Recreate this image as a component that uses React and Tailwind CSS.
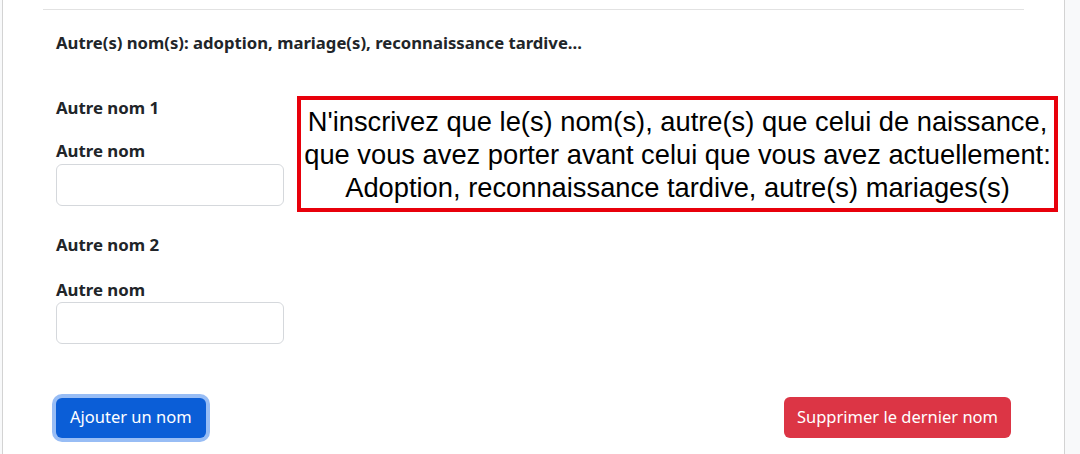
export default function App() {
  const entries = [1, 2];
  return (
    <div className="flex h-[454px] w-[1080px] overflow-hidden bg-[#f8f9fa] font-['Noto_Sans',sans-serif] text-[#212529]">
      <div className="ml-[2px] w-[1063px] border-x border-[#d3d3d3] bg-white">
        <div className="mx-[40px] mt-[9px] border-t border-[#e2e2e2]" />
        <div className="pl-[53px] pr-[40px]">
          <h6 className="mt-[21px] text-[16.7px] font-bold leading-[24px]">
            Autre(s) nom(s): adoption, mariage(s), reconnaissance tardive...
          </h6>
          <div className="mt-[41px] flex items-start gap-[13px]">
            <div className="w-[228px] shrink-0">
              {entries.map((n) => (
                <div key={n} className={n > 1 ? "mt-[27px]" : ""}>
                  <div className="text-[16.8px] font-bold leading-[24px]">Autre nom {n}</div>
                  <label
                    className={`block text-[16.8px] font-bold leading-[24px] ${n > 1 ? "mt-[21px]" : "mt-[19px]"}`}
                  >
                    Autre nom
                  </label>
                  <input
                    type="text"
                    className={`block h-[42px] w-[228px] rounded-[6px] border border-[#d5d8dc] bg-white px-3 ${n > 1 ? "mt-0" : "mt-[1px]"}`}
                  />
                </div>
              ))}
            </div>
            <div className="w-[761px] shrink-0 border-[4px] border-[#e8000b] pb-[4px] pt-[5px] text-center font-['Liberation_Sans',Arial,sans-serif] text-[27.3px] leading-[33px] text-black">
              N'inscrivez que le(s) nom(s), autre(s) que celui de naissance,
              <br />
              que vous avez porter avant celui que vous avez actuellement:
              <br />
              Adoption, reconnaissance tardive, autre(s) mariages(s)
            </div>
          </div>
          <div className="mt-[53px] flex items-center justify-between pr-[13px]">
            <button className="h-[40px] rounded-[6px] bg-[#0b5ed7] px-[14px] text-[16.5px] text-white ring-4 ring-[#98bdf5]">
              Ajouter un nom
            </button>
            <button className="h-[41px] rounded-[6px] bg-[#dc3545] px-[13px] text-[16.5px] text-white">
              Supprimer le dernier nom
            </button>
          </div>
        </div>
      </div>
    </div>
  );
}
